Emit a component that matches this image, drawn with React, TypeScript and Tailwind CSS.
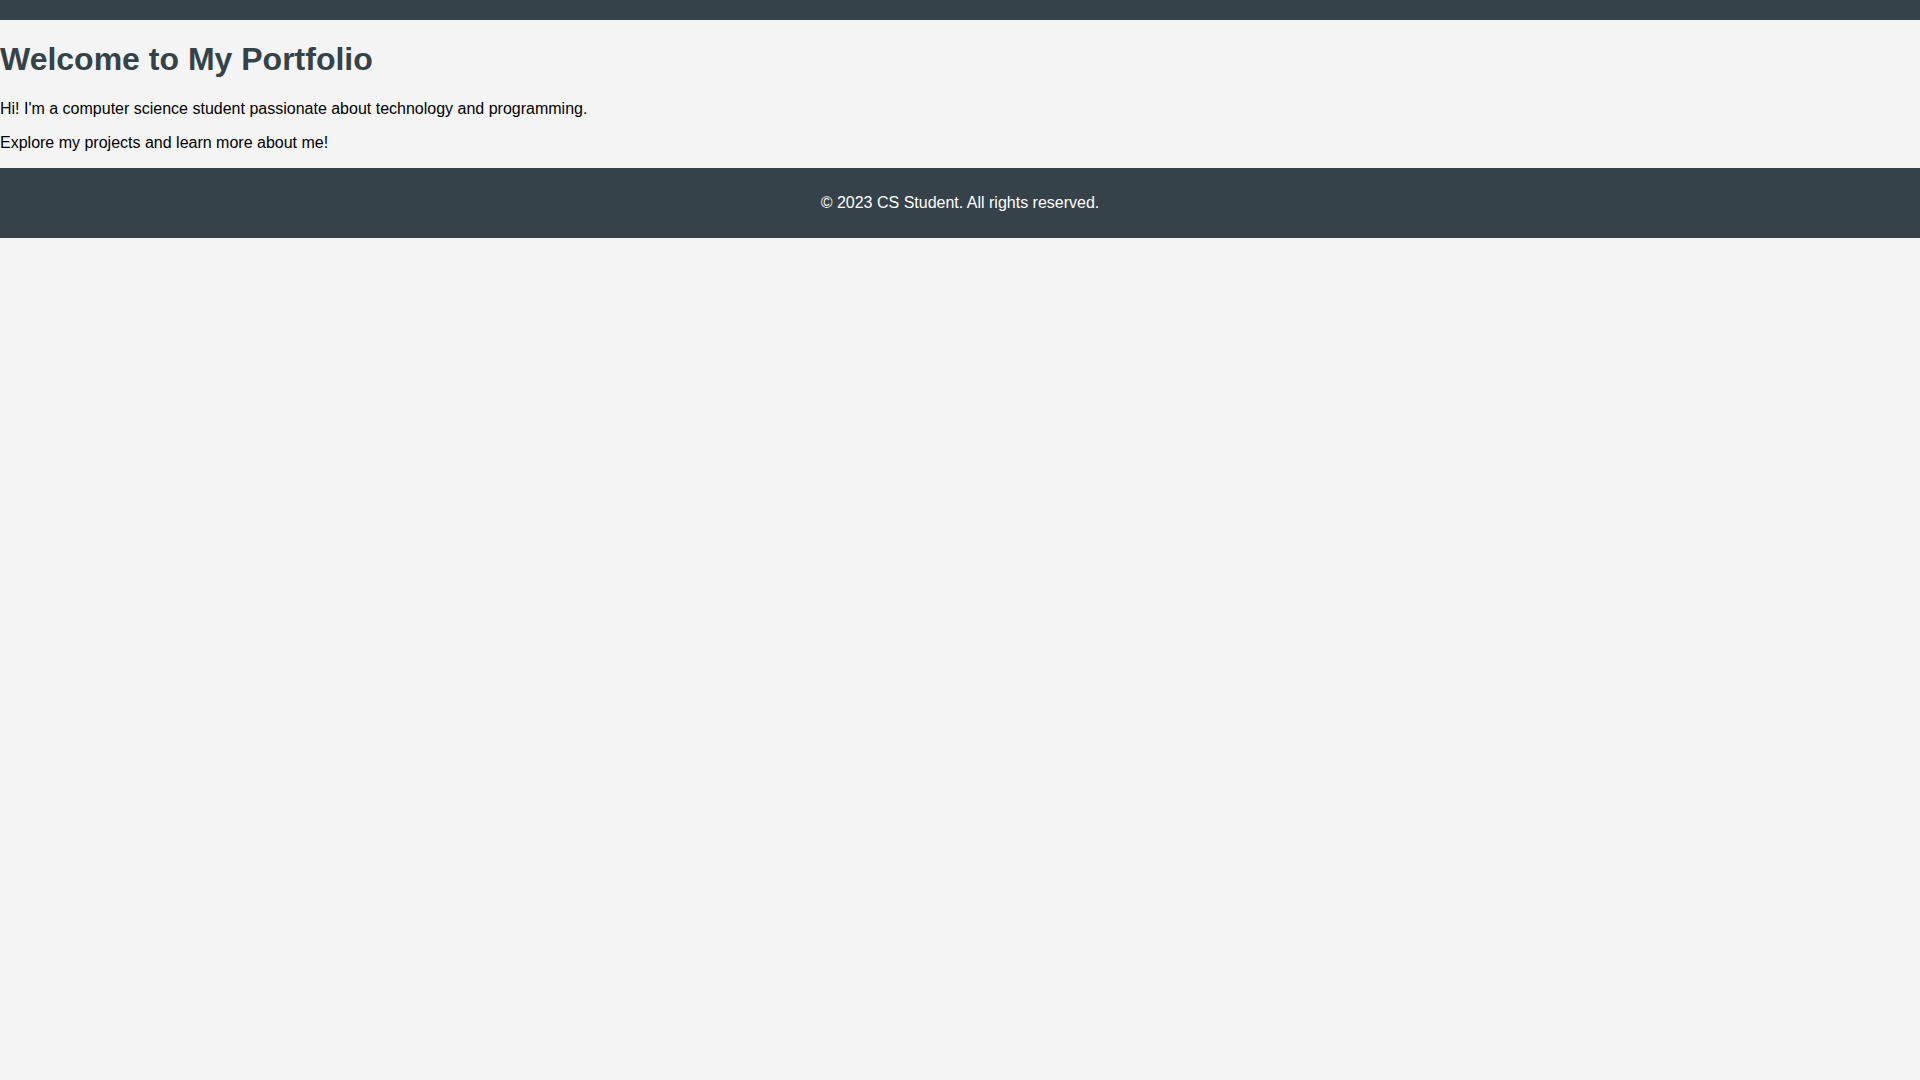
export default function App() {
  return (
    <div className="min-h-screen bg-[#f4f4f4] font-['Liberation_Sans',Arial,sans-serif] text-black">
      <header className="h-5 bg-[#35424a]" />

      <main>
        <h1 className="mt-[21px] mb-[22px] text-[32px] leading-[37px] font-bold text-[#35424a]">Welcome to My Portfolio</h1>
        <p className="mb-4 text-base leading-[18px]">Hi! I'm a computer science student passionate about technology and programming.</p>
        <p className="mb-4 text-base leading-[18px]">Explore my projects and learn more about me!</p>
      </main>

      <footer className="bg-[#35424a] py-[26px] text-center text-white">
        <p className="text-base leading-[18px]">© 2023 CS Student. All rights reserved.</p>
      </footer>
    </div>
  );
}
